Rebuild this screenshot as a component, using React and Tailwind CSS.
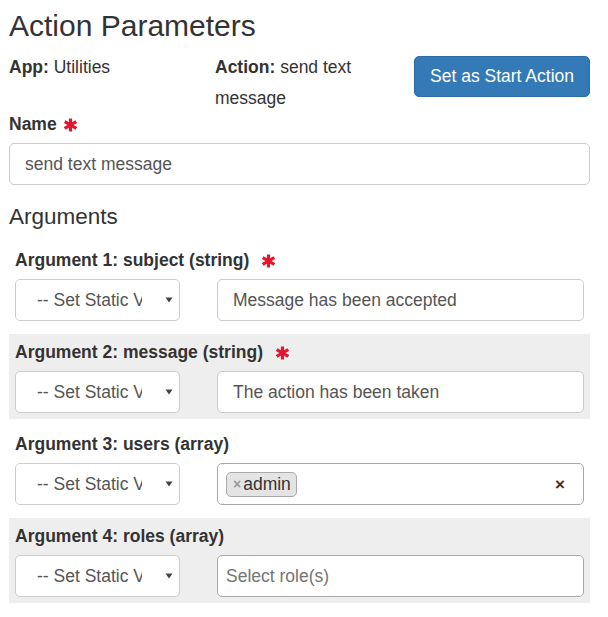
import React from "react";

const Star = () => (
  <svg width="13" height="14" viewBox="0 0 13 14" className="inline-block">
    <g stroke="#e2162f" strokeWidth="3.2" strokeLinecap="butt">
      <line x1="6.5" y1="0.5" x2="6.5" y2="13.5" />
      <line x1="0.7" y1="3.6" x2="12.3" y2="10.4" />
      <line x1="0.7" y1="10.4" x2="12.3" y2="3.6" />
    </g>
  </svg>
);

const SelectBox = () => (
  <div className="w-[165px] h-[42px] shrink-0 bg-white border border-[#ccc] rounded-[5px] flex items-center">
    <div className="ml-[21px] w-[105px] overflow-hidden whitespace-nowrap text-[17.5px] text-[#555]">
      -- Set Static Value --
    </div>
    <svg width="8" height="6" viewBox="0 0 8 6" className="ml-[23px]">
      <path d="M0.5 0.5 L7.5 0.5 L4 5.5 Z" fill="#444" />
    </svg>
  </div>
);

const TextBox = ({ children }) => (
  <div className="flex-1 h-[42px] bg-white border border-[#ccc] rounded-[5px] flex items-center pl-[15px] text-[17.5px] text-[#555]">
    {children}
  </div>
);

const Row = ({ label, required, gray, children }) => (
  <div className={`px-[6px] pt-[6px] pb-[6px] ${gray ? "bg-[#eeeeee]" : ""}`}>
    <div className="h-[25px] leading-[25px] font-bold text-[17.5px] text-[#333] mb-[6px] flex items-center">
      <span>{label}</span>
      {required && (
        <span className="ml-[13px] flex items-center">
          <Star />
        </span>
      )}
    </div>
    <div className="flex gap-[37px]">
      <SelectBox />
      {children}
    </div>
  </div>
);

export default function App() {
  return (
    <div
      className="w-[608px] h-[617px] bg-white text-[#333] pl-[9px] pr-[18px]"
      style={{ fontFamily: '"Liberation Sans", Arial, sans-serif' }}
    >
      <h3 className="pt-[9px] text-[30px] leading-[33px] font-normal text-[#333]">
        Action Parameters
      </h3>
      <div className="flex mt-[10px] text-[17.5px] leading-[31px]">
        <div className="w-[206px]">
          <b>App:</b> Utilities
        </div>
        <div className="w-[190px]">
          <b>Action:</b> send text message
        </div>
        <div className="flex-1 flex justify-end pt-[4px]">
          <button className="h-[41px] px-[15px] bg-[#337ab7] border border-[#2e6da4] rounded-[5px] text-white text-[17.5px] leading-[25px]">
            Set as Start Action
          </button>
        </div>
      </div>
      <div className="mt-[-2px] h-[25px] leading-[25px] font-bold text-[17.5px] flex items-center">
        <span>Name</span>
        <span className="ml-[7px] flex items-center">
          <Star />
        </span>
      </div>
      <div className="mt-[6px] h-[42px] border border-[#ccc] rounded-[5px] flex items-center pl-[15px] text-[17.5px] text-[#555]">
        send text message
      </div>
      <h4 className="mt-[19px] text-[22.5px] leading-[25px] font-normal text-[#333]">
        Arguments
      </h4>
      <div className="mt-[13px] flex flex-col gap-[7px]">
        <Row label="Argument 1: subject (string)" required>
          <TextBox>Message has been accepted</TextBox>
        </Row>
        <Row label="Argument 2: message (string)" required gray>
          <TextBox>The action has been taken</TextBox>
        </Row>
        <Row label="Argument 3: users (array)">
          <div className="flex-1 h-[42px] bg-white border border-[#aaa] rounded-[5px] flex items-center pl-[8px] pr-[18px]">
            <div className="h-[25px] flex items-center bg-[#e4e4e4] border border-[#aaa] rounded-[5px] pl-[6px] pr-[5px] text-[17.5px] text-[#333]">
              <span className="text-[#999] text-[14px] font-bold mr-[2px] leading-none">×</span>
              admin
            </div>
            <div className="flex-1" />
            <span className="text-[#333] text-[17px] font-bold leading-none">×</span>
          </div>
        </Row>
        <Row label="Argument 4: roles (array)" gray>
          <div className="flex-1 h-[42px] bg-white border border-[#aaa] rounded-[5px] flex items-center pl-[8px] text-[17.5px] text-[#757575]">
            Select role(s)
          </div>
        </Row>
      </div>
    </div>
  );
}
